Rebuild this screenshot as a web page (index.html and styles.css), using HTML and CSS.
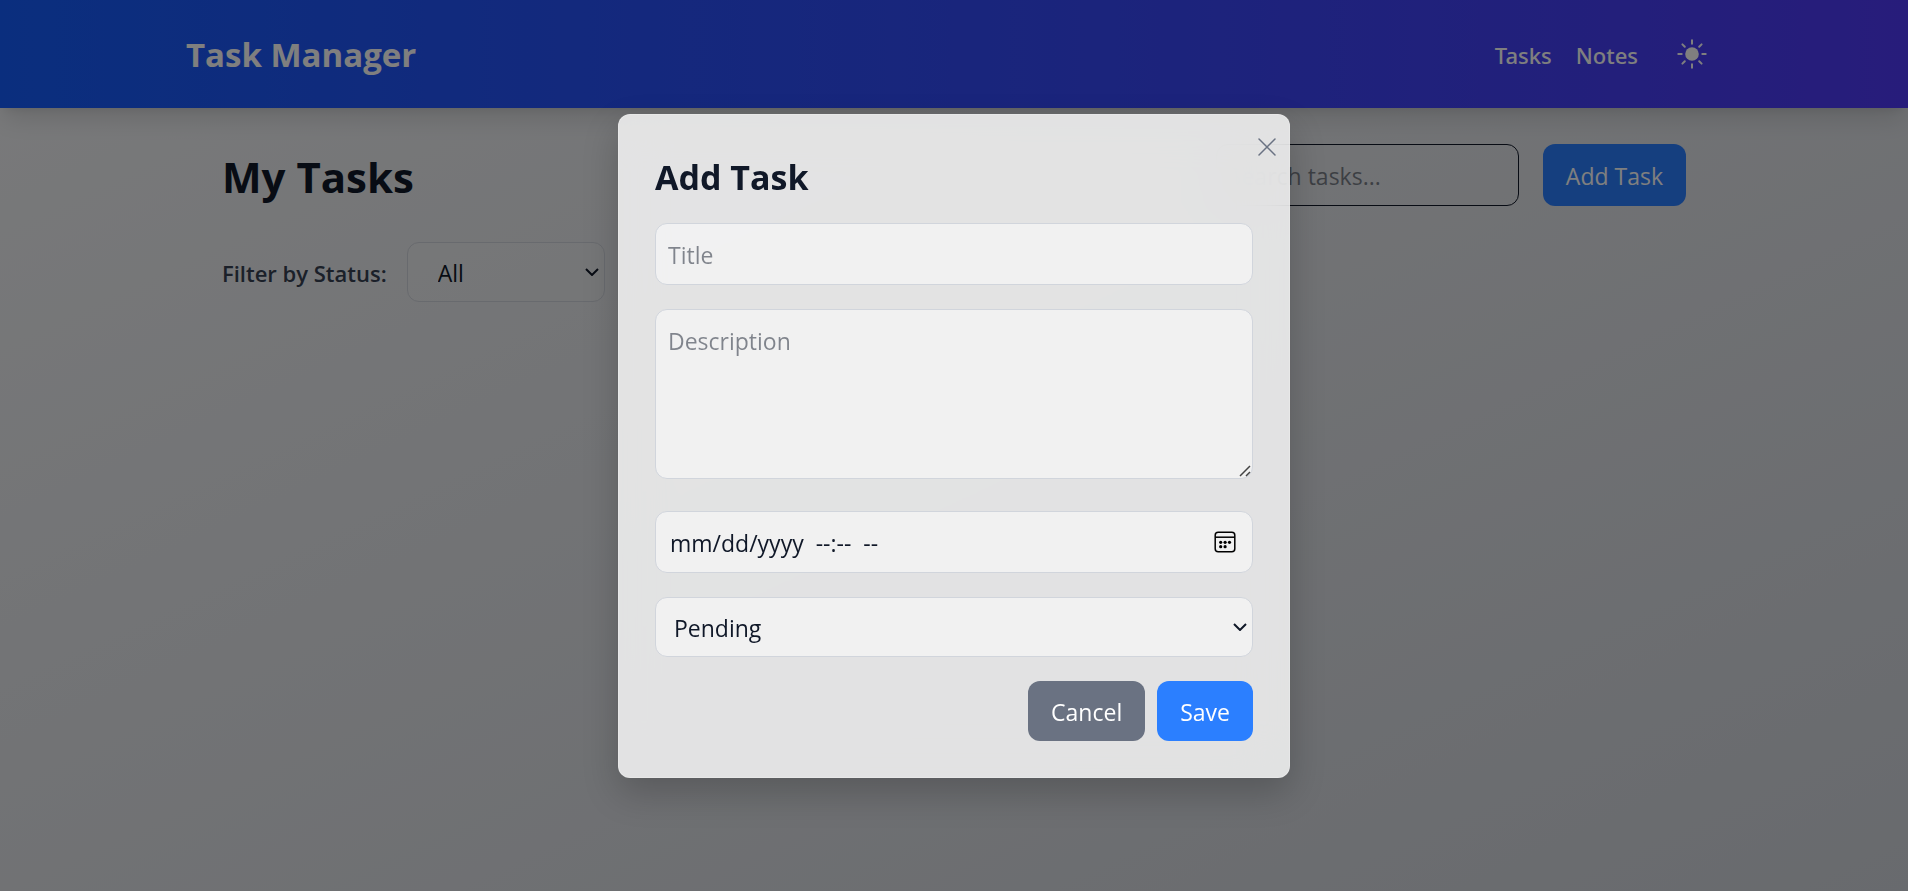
FILE: index.html
```html
<!DOCTYPE html>
<html lang="en">
<head>
<meta charset="utf-8">
<meta name="viewport" content="width=device-width, initial-scale=1">
<title>Task Manager</title>
<link rel="stylesheet" href="styles.css">
</head>
<body class="page">
<header class="header">
  <div class="header-inner">
    <div class="brand">Task Manager</div>
    <nav class="nav">
      <a class="nav-link" href="#tasks">Tasks</a>
      <a class="nav-link" href="#notes">Notes</a>
      <button class="theme-toggle" type="button" aria-label="Toggle theme">
        <svg class="sun" viewBox="0 0 36 36" aria-hidden="true"><circle cx="18" cy="18" r="6.8" fill="currentColor"/><path d="M18 4.3v3.4M18 28.3v3.4M4.3 18h3.4M28.3 18h3.4M8.4 8.4l2.4 2.4M25.2 25.2l2.4 2.4M8.4 27.6l2.4-2.4M25.2 10.8l2.4-2.4" fill="none" stroke="currentColor" stroke-width="2" stroke-linecap="round"/></svg>
      </button>
    </nav>
  </div>
</header>
<main class="main">
  <div class="toolbar">
    <h1 class="heading">My Tasks</h1>
    <div class="actions">
      <input class="search" type="text" placeholder="Search tasks..." aria-label="Search tasks">
      <button class="btn btn-primary" type="button">Add Task</button>
    </div>
  </div>
  <div class="filter">
    <label class="filter-label" for="status-filter">Filter by Status:</label>
    <div class="select-wrap">
      <select class="filter-select" id="status-filter"><option>All</option><option>Pending</option><option>Completed</option></select>
      <svg class="chevron" viewBox="0 0 14 8" aria-hidden="true"><path d="M1 1l6 6 6-6" fill="none" stroke="currentColor" stroke-width="2"/></svg>
    </div>
  </div>
</main>
<div class="overlay">
  <div class="modal" role="dialog" aria-labelledby="modal-title">
    <button class="close" type="button" aria-label="Close">
      <svg class="close-icon" viewBox="0 0 18 18" aria-hidden="true"><path d="M1 1l16 16M17 1 1 17" fill="none" stroke="currentColor" stroke-width="1.5" stroke-linecap="round"/></svg>
    </button>
    <h2 class="modal-title" id="modal-title">Add Task</h2>
    <form class="form">
      <input class="field" type="text" placeholder="Title" aria-label="Title">
      <textarea class="field area" placeholder="Description" aria-label="Description"></textarea>
      <div class="date-wrap">
        <input class="field date" type="text" placeholder="mm/dd/yyyy&nbsp; --:--&nbsp; --" aria-label="Due date">
        <button class="picker" type="button" aria-label="Open date picker">
          <svg class="picker-icon" viewBox="0 0 22 22" aria-hidden="true"><rect x="1.2" y="1.2" width="19.6" height="19.6" rx="3" fill="none" stroke="currentColor" stroke-width="1.5"/><path d="M1.2 6.2h19.6" stroke="currentColor" stroke-width="1.5"/><g fill="currentColor"><circle cx="6.7" cy="11.3" r="1.6"/><circle cx="11.1" cy="11.3" r="1.6"/><circle cx="15.5" cy="11.3" r="1.6"/><circle cx="6.7" cy="15.7" r="1.6"/><circle cx="11.1" cy="15.7" r="1.6"/></g></svg>
        </button>
      </div>
      <div class="select-wrap">
        <select class="field select" aria-label="Status"><option>Pending</option><option>Completed</option></select>
        <svg class="chevron" viewBox="0 0 14 8" aria-hidden="true"><path d="M1 1l6 6 6-6" fill="none" stroke="currentColor" stroke-width="2"/></svg>
      </div>
      <div class="form-actions">
        <button class="btn btn-muted" type="button">Cancel</button>
        <button class="btn btn-primary" type="submit">Save</button>
      </div>
    </form>
  </div>
</div>
</body>
</html>
```
FILE: styles.css
```css
*, *::before, *::after { box-sizing: border-box; }
html { height: 100%; }
.page {
  margin: 0;
  min-height: 100%;
  font: 23px/36px "Segoe UI", "Open Sans", "Noto Sans", sans-serif;
  color: #101828;
  background: linear-gradient(to bottom right, #f3f4f6, #d1d5dc);
}
input, select, textarea, button { margin: 0; font: inherit; color: inherit; }
.header {
  background: linear-gradient(to right, #155dfc, #4f39f6);
  color: #fff;
  box-shadow: 0 15px 23px -5px rgba(0, 0, 0, .12), 0 6px 9px -6px rgba(0, 0, 0, .1);
}
.header-inner {
  max-width: 1536px;
  margin: 0 auto;
  padding: 24px 0;
  display: flex;
  align-items: center;
  justify-content: space-between;
}
.brand { padding-top: 2px; font-size: 33px; line-height: 48px; font-weight: 700; }
.nav { display: flex; align-items: center; gap: 24px; }
.nav-link { padding-top: 2px; font-family: "Segoe UI", "Noto Sans", sans-serif; font-size: 22px; color: inherit; text-decoration: none; font-weight: 500; }
.theme-toggle { padding: 12px; border: 0; background: none; display: flex; }
.sun { width: 36px; height: 36px; }
.main { max-width: 1536px; margin: 0 auto; padding: 36px; }
.toolbar { display: flex; align-items: center; justify-content: space-between; margin-bottom: 36px; }
.heading { margin: 0; padding-top: 4px; font-size: 42px; line-height: 58px; font-weight: 700; }
.actions { display: flex; gap: 24px; }
.search { width: 303px; padding: 13px 12px 11px; border: 1px solid #101828; border-radius: 12px; background: transparent; }
.search::placeholder, .field::placeholder { color: #101828; opacity: .5; }
.btn { padding: 13px 23px 11px; border: 0; border-radius: 12px; color: #fff; }
.btn-primary { background: #2b7fff; }
.btn-muted { background: #6a7282; }
.filter { display: flex; align-items: center; gap: 20px; }
.filter-label { padding-top: 2px; font-size: 22px; font-weight: 600; color: #364153; }
.select-wrap { position: relative; display: flex; align-items: center; }
.filter-select {
  width: 198px;
  height: 60px;
  padding: 2px 30px 0;
  appearance: none;
  border: 1px solid #d1d5dc;
  border-radius: 12px;
  background: rgba(255, 255, 255, .1);
}
.chevron { position: absolute; right: 6px; width: 14px; height: 8px; pointer-events: none; }
.overlay {
  position: fixed;
  inset: 0;
  display: flex;
  align-items: center;
  justify-content: center;
  background: rgba(0, 0, 0, .5);
}
.modal {
  position: relative;
  width: 672px;
  padding: 36px;
  border: 1px solid rgba(255, 255, 255, .2);
  border-radius: 12px;
  background: rgba(255, 255, 255, .8);
  backdrop-filter: blur(24px);
  box-shadow: 0 15px 36px rgba(0, 0, 0, .2);
}
.close { position: absolute; top: 13px; right: 13px; padding: 10px 0; border: 0; background: none; color: #6a7282; display: flex; }
.close-icon { width: 18px; height: 18px; }
.modal-title { margin: 0 0 24px; padding-top: 4px; font-size: 34px; line-height: 44px; font-weight: 700; }
.form { display: flex; flex-direction: column; gap: 24px; }
.field { width: 100%; padding: 13px 12px 11px; border: 1px solid #d1d5dc; border-radius: 12px; background: rgba(255, 255, 255, .5); }
.area { height: 170px; margin-bottom: 8px; resize: vertical; }
.area::-webkit-resizer {
  background: url("data:image/svg+xml,%3Csvg xmlns='http://www.w3.org/2000/svg' viewBox='0 0 15 15'%3E%3Cpath d='M3 13 13 3M9 13l4-4' fill='none' stroke='%23444' stroke-width='1.5'/%3E%3C/svg%3E") no-repeat;
}
.date-wrap { position: relative; display: flex; align-items: center; }
.date { height: 62px; padding: 13px 14px 11px; }
.date::placeholder { opacity: 1; }
.picker { position: absolute; right: 17px; padding: 0; border: 0; background: none; color: #000; display: flex; }
.picker-icon { width: 22px; height: 22px; }
.select { height: 60px; padding: 2px 18px 0; appearance: none; }
.form-actions { display: flex; justify-content: flex-end; gap: 12px; }
```
